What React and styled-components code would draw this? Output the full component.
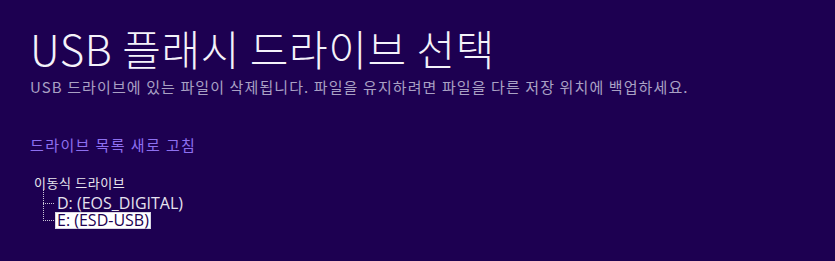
import React from "react";
import styled, { createGlobalStyle } from "styled-components";

const GlobalStyle = createGlobalStyle`
  html, body {
    margin: 0;
    padding: 0;
    background: #1d0051;
  }
`;

const Page = styled.div`
  width: 835px;
  height: 261px;
  box-sizing: border-box;
  padding: 23px 0 0 30px;
  background: #1d0051;
  font-family: "Noto Sans CJK KR", "Noto Sans", sans-serif;
  color: #ffffff;
  overflow: hidden;
`;

const Title = styled.h1`
  margin: 0;
  font-size: 42px;
  font-weight: 300;
  line-height: 50px;
  letter-spacing: 0.6px;
  color: #f4f2fa;
`;

const Subtitle = styled.p`
  margin: 4px 0 0;
  font-size: 15px;
  line-height: 20px;
  letter-spacing: 1.1px;
  color: #a9a1c4;
`;

const Refresh = styled.a`
  display: block;
  margin-top: 38px;
  font-size: 15px;
  line-height: 20px;
  letter-spacing: 1.4px;
  color: #8d6ff0;
  cursor: pointer;
`;

const Tree = styled.div`
  margin: 19px 0 0 4px;
`;

const GroupLabel = styled.div`
  font-size: 13px;
  line-height: 18px;
  letter-spacing: 0.6px;
  color: #e8e6ee;
`;

const Items = styled.ul`
  list-style: none;
  margin: 3px 0 0 9px;
  padding: 0;
`;

const Item = styled.li`
  position: relative;
  padding-left: 12px;
  height: 17px;
  display: flex;
  align-items: center;

  &::before {
    content: "";
    position: absolute;
    left: 0;
    top: ${({ first }) => (first ? "-6px" : "-8px")};
    height: ${({ first }) => (first ? "14px" : "17px")};
    border-left: 1px dotted #c9c5d8;
  }

  &::after {
    content: "";
    position: absolute;
    left: 0;
    top: 8px;
    width: 11px;
    border-top: 1px dotted #c9c5d8;
  }
`;

const ItemText = styled.span`
  font-family: "Open Sans", "Noto Sans", sans-serif;
  font-size: 16px;
  line-height: 17px;
  padding: 0 2px;
  color: ${({ selected }) => (selected ? "#1d0051" : "#e6e3ef")};
  background: ${({ selected }) => (selected ? "#ffffff" : "transparent")};
  box-shadow: ${({ selected }) => (selected ? "inset 0 0 0 1px #d9d6e3" : "none")};
`;

export default function App() {
  return (
    <>
      <GlobalStyle />
      <Page>
        <Title>USB 플래시 드라이브 선택</Title>
        <Subtitle>
          USB 드라이브에 있는 파일이 삭제됩니다. 파일을 유지하려면 파일을 다른 저장 위치에 백업하세요.
        </Subtitle>
        <Refresh>드라이브 목록 새로 고침</Refresh>
        <Tree>
          <GroupLabel>이동식 드라이브</GroupLabel>
          <Items>
            <Item first>
              <ItemText>D: (EOS_DIGITAL)</ItemText>
            </Item>
            <Item>
              <ItemText selected>E: (ESD-USB)</ItemText>
            </Item>
          </Items>
        </Tree>
      </Page>
    </>
  );
}
